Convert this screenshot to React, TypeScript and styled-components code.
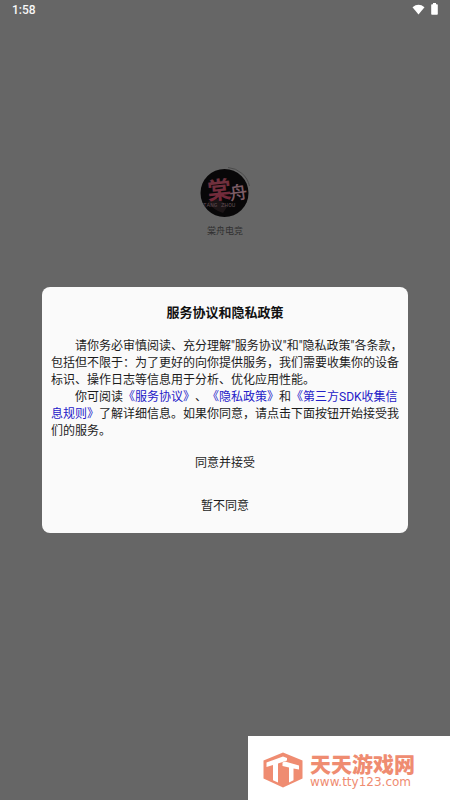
import React from "react";
import styled, { createGlobalStyle } from "styled-components";

const GlobalStyle = createGlobalStyle`
  * { box-sizing: border-box; }
  html, body { margin: 0; background: #666666; }
  body { font-family: Roboto, "Noto Sans CJK SC", sans-serif; }
`;

const Screen = styled.div`
  position: relative;
  min-height: 100vh;
  display: flex;
  flex-direction: column;
  background: #666666;
  overflow: hidden;
`;

const StatusBar = styled.header`
  display: flex;
  align-items: center;
  justify-content: space-between;
  height: 20px;
  padding: 0 12px;
  color: #f8f8f8;
  font-size: 12px;
  font-weight: 500;
  line-height: 20px;
`;

const StatusIcons = styled.div`
  display: flex;
  align-items: center;
  gap: 6px;
  height: 20px;
  padding-bottom: 2px;
`;

const Brand = styled.section`
  position: absolute;
  top: 166px;
  left: 0;
  right: 0;
  display: flex;
  flex-direction: column;
  align-items: center;
  gap: 5px;
`;

const BrandName = styled.span`
  color: #303030;
  font-size: 9px;
  line-height: 14px;
`;

const Overlay = styled.main`
  position: relative;
  flex: 1;
  display: flex;
  align-items: center;
  justify-content: center;
  padding: 0 42px;
`;

const Dialog = styled.section`
  width: 100%;
  padding: 16px 9px 7px;
  border-radius: 8px;
  background: #fafafa;
  color: #1c1c1c;
`;

const Title = styled.h1`
  margin: 0 0 15px;
  color: #111111;
  font-size: 13px;
  font-weight: 600;
  line-height: 20px;
  text-align: center;
`;

const Paragraph = styled.p`
  margin: 0;
  font-size: 12px;
  line-height: 17px;
  text-indent: 2em;
  white-space: nowrap;
  text-spacing-trim: space-all;
`;

const DocLink = styled.a`
  color: #2420c8;
  text-decoration: none;
`;

const Actions = styled.div`
  display: flex;
  flex-direction: column;
  align-items: center;
`;

const ActionButton = styled.button`
  width: 100%;
  height: 43px;
  padding: 0;
  border: 0;
  background: transparent;
  color: #1c1c1c;
  font: inherit;
  font-size: 12px;
  cursor: pointer;
`;

const SiteBadge = styled.aside`
  position: absolute;
  right: 0;
  bottom: 0;
  display: flex;
  align-items: center;
  gap: 7px;
  width: 202px;
  height: 64px;
  padding: 4px 0 0 15px;
  background: #ffffff;
  color: #ef8c71;
`;

const SiteText = styled.div`
  display: flex;
  flex-direction: column;
  white-space: nowrap;
`;

const SiteName = styled.strong`
  font-family: "Noto Sans CJK SC", sans-serif;
  font-size: 21px;
  font-weight: 900;
  line-height: 24px;
`;

const SiteUrl = styled.span`
  font-family: "DejaVu Sans", sans-serif;
  font-size: 12px;
  font-weight: 400;
  line-height: 14px;
`;

const WifiIcon = () => (
  <svg width="13" height="11" viewBox="0 0 13 11" aria-hidden="true">
    <path d="M.5 3.200Q6.500-1.600 12.500 3.200L6.500 10.500Z" fill="#fff" />
  </svg>
);

const BatteryIcon = () => (
  <svg width="7" height="12" viewBox="0 0 7 12" aria-hidden="true">
    <path d="M2 0h3v1.300h1q.8 0 .8.800v8.800q0 .8-.8.800H1Q.2 11.700.2 10.900V2.100q0-.8.800-.800H2Z" fill="#fff" />
  </svg>
);

const BrandLogo = () => (
  <svg width="54" height="53" viewBox="0 0 54 53" role="img" aria-label="棠舟">
    <defs>
      <linearGradient id="ink" x1="0" y1="0" x2="0" y2="1">
        <stop offset="0" stopColor="#6d3540" />
        <stop offset="1" stopColor="#742638" />
      </linearGradient>
    </defs>
    <path d="M30 1.500A24 24 0 0 1 51.500 20" fill="none" stroke="#4c4c4c" strokeWidth="1" />
    <circle cx="26.500" cy="27" r="24" fill="#080708" />
    <path d="M10 36l8-4 7 4 4 5-4 6q-10-3-15-11Z" fill="#1c1517" />
    <g fontFamily="'Noto Sans CJK SC', sans-serif">
      <text x="9" y="33" fontSize="24" fontWeight="700" fill="url(#ink)" transform="rotate(-6 20 22)">棠</text>
      <text x="31" y="33" fontSize="18" fontWeight="500" fill="#7c5c65" transform="rotate(-8 40 25)">舟</text>
    </g>
    <text x="5" y="41" fontFamily="'Liberation Mono', monospace" fontSize="6" fill="#5c4a50">TANG ZHOU</text>
  </svg>
);

const SiteLogo = () => (
  <svg width="40" height="36" viewBox="0 0 40 36" aria-hidden="true">
    <path d="M20 .5 39.500 8.500v18L20 35.500.5 26.500v-18Z" fill="#ef8c71" />
    <path d="M3.500 10.500 20 4.500 24 6v2.500L15 11.500V30.500l-5-2.300V13L3.500 15Z" fill="#fff" />
    <path d="M19.500 10.500 22 9.500 36 13.500v4L30.500 16.500V28.200l-4.500 2.200V15.500L19.500 14Z" fill="#fff" />
  </svg>
);

export default function App() {
  return (
    <Screen lang="zh-CN">
      <GlobalStyle />
      <StatusBar>
        <time>1:58</time>
        <StatusIcons>
          <WifiIcon />
          <BatteryIcon />
        </StatusIcons>
      </StatusBar>
      <Brand>
        <BrandLogo />
        <BrandName>棠舟电竞</BrandName>
      </Brand>
      <Overlay>
        <Dialog role="dialog" aria-labelledby="agreement-title">
          <Title id="agreement-title">服务协议和隐私政策</Title>
          <Paragraph>
            请你务必审慎阅读、充分理解"服务协议"和"隐私政策"各条款，
            <br />
            包括但不限于：为了更好的向你提供服务，我们需要收集你的设备
            <br />
            标识、操作日志等信息用于分析、优化应用性能。
          </Paragraph>
          <Paragraph>
            你可阅读<DocLink href="#service">《服务协议》</DocLink>、
            <DocLink href="#privacy">《隐私政策》</DocLink>和
            <DocLink href="#sdk">
              《第三方SDK收集信
              <br />
              息规则》
            </DocLink>
            了解详细信息。如果你同意，请点击下面按钮开始接受我
            <br />
            们的服务。
          </Paragraph>
          <Actions>
            <ActionButton type="button">同意并接受</ActionButton>
            <ActionButton type="button">暂不同意</ActionButton>
          </Actions>
        </Dialog>
      </Overlay>
      <SiteBadge>
        <SiteLogo />
        <SiteText>
          <SiteName>天天游戏网</SiteName>
          <SiteUrl>www.tty123.com</SiteUrl>
        </SiteText>
      </SiteBadge>
    </Screen>
  );
}
